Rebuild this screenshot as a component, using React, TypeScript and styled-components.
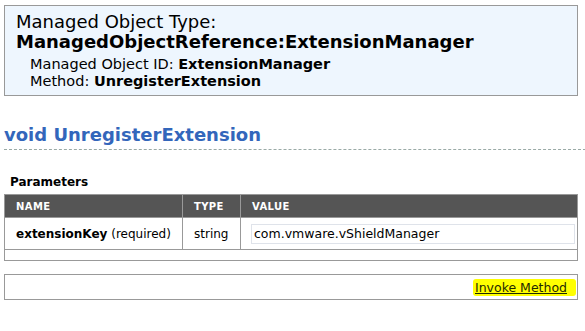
import { useEffect, useRef } from "react";
import styled, { createGlobalStyle } from "styled-components";

const Global = createGlobalStyle`
  html, body {
    margin: 0;
    padding: 0;
    background: #fff;
  }
  body {
    font-family: "DejaVu Sans", Verdana, sans-serif;
    color: #000;
  }
`;

const Page = styled.div`
  width: 574px;
  padding: 5px 0 0 4px;
`;

const ObjectBox = styled.div`
  background: #eef6fe;
  border: 1px solid #999;
  padding: 6px 11px 5px 11px;

  .type {
    font-size: 18px;
    line-height: 20px;
  }
  .ref {
    font-size: 18px;
    line-height: 20px;
    font-weight: bold;
  }
  .details {
    margin-top: 4px;
    padding-left: 14px;
    font-size: 14.5px;
    line-height: 17px;
  }
`;

const MethodTitle = styled.h2`
  margin: 28px -8px 0 0;
  padding-bottom: 3px;
  font-size: 18px;
  line-height: 22px;
  font-weight: bold;
  color: #3366bb;
  border-bottom: 1px dashed #9aaaa6;
`;

const SectionLabel = styled.h3`
  margin: 25px 0 0 6px;
  font-size: 12px;
  line-height: 15px;
  font-weight: bold;
`;

const ParamTable = styled.table`
  width: 574px;
  margin-top: 4px;
  table-layout: fixed;
  border-collapse: collapse;
  border: 1px solid #999;
  font-size: 12px;

  th {
    background: #555;
    color: #fff;
    font-size: 10px;
    font-weight: bold;
    letter-spacing: 0.4px;
    text-align: left;
    height: 22px;
    padding: 0 11px;
    border-left: 1px solid #999;
  }
  th:nth-child(1) {
    width: 155px;
  }
  th:nth-child(2) {
    width: 35px;
  }
  td {
    height: 31px;
    padding: 0 11px;
    border-left: 1px solid #999;
    border-top: 1px solid #999;
    white-space: nowrap;
  }
  td.spacer {
    height: 10px;
  }
`;

const ValueCell = styled.td`
  && {
    padding-left: 10px;
  }
`;

const ValueInput = styled.input`
  box-sizing: border-box;
  width: 324px;
  height: 20px;
  border: 1px solid #dfe3ea;
  padding: 0 2px;
  font-family: "DejaVu Sans", Verdana, sans-serif;
  font-size: 12.5px;
  color: #000;
  outline: none;
  vertical-align: middle;
`;

const ActionBox = styled.div`
  margin-top: 13px;
  height: 24px;
  border: 1px solid #999;
  display: flex;
  justify-content: flex-end;
  align-items: center;
  padding-right: 1px;
`;

const InvokeLink = styled.a`
  font-size: 12.5px;
  line-height: 15px;
  color: #1f2a00;
  text-decoration: underline;
  background: #ffff00;
  padding: 1px 9px 1px 2px;
  border-radius: 3px;
  cursor: pointer;
`;

export default function App() {
  const inputRef = useRef<HTMLInputElement>(null);

  useEffect(() => {
    const el = inputRef.current;
    if (el) {
      el.focus();
      el.setSelectionRange(el.value.length, el.value.length);
    }
  }, []);

  return (
    <>
      <Global />
      <Page>
        <ObjectBox>
          <div className="type">Managed Object Type:</div>
          <div className="ref">ManagedObjectReference:ExtensionManager</div>
          <div className="details">
            <div>
              Managed Object ID: <b>ExtensionManager</b>
            </div>
            <div>
              Method: <b>UnregisterExtension</b>
            </div>
          </div>
        </ObjectBox>

        <MethodTitle>void UnregisterExtension</MethodTitle>

        <SectionLabel>Parameters</SectionLabel>
        <ParamTable>
          <thead>
            <tr>
              <th>NAME</th>
              <th>TYPE</th>
              <th>VALUE</th>
            </tr>
          </thead>
          <tbody>
            <tr>
              <td>
                <b>extensionKey</b> (required)
              </td>
              <td>string</td>
              <ValueCell>
                <ValueInput ref={inputRef} defaultValue="com.vmware.vShieldManager" />
              </ValueCell>
            </tr>
            <tr>
              <td className="spacer" colSpan={3} />
            </tr>
          </tbody>
        </ParamTable>

        <ActionBox>
          <InvokeLink>Invoke Method</InvokeLink>
        </ActionBox>
      </Page>
    </>
  );
}
